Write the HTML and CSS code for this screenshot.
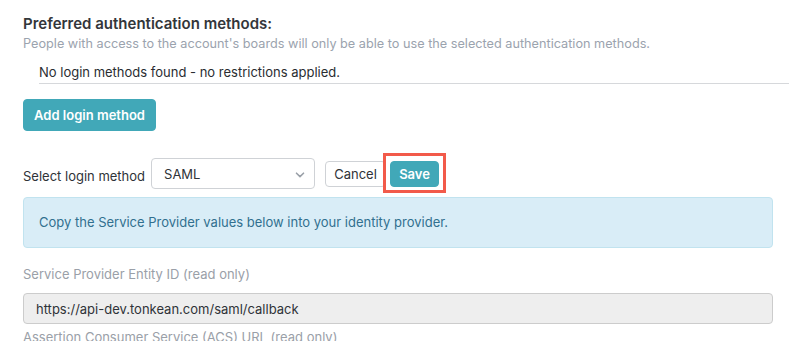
FILE: index.html
```html
<!DOCTYPE html>
<html lang="en">
<head>
    <meta charset="UTF-8">
    <meta name="viewport" content="width=device-width, initial-scale=1.0">
    <title>Login methods</title>
    <link rel="stylesheet" href="styles.css">
</head>
<body>
    <div class="page">
        <h3 class="title">Preferred authentication methods:</h3>
        <p class="subtitle">People with access to the account's boards will only be able to use the selected authentication methods.</p>

        <div class="methods-list">
            <div class="methods-empty">No login methods found - no restrictions applied.</div>
        </div>

        <button class="btn btn-primary btn-add">Add login method</button>

        <div class="select-row">
            <label for="loginMethod" class="select-label">Select login method</label>
            <div class="select-wrap">
                <select id="loginMethod" class="select">
                    <option>SAML</option>
                    <option>Google</option>
                    <option>Microsoft</option>
                </select>
                <svg class="chevron" width="10" height="6" viewBox="0 0 10 6"><path d="M1.5 1.2 L5 4.6 L8.5 1.2" fill="none" stroke="#9aa0a8" stroke-width="1.6" stroke-linecap="round" stroke-linejoin="round"/></svg>
            </div>
            <button class="btn btn-default">Cancel</button>
            <span class="highlight">
                <button class="btn btn-primary btn-save">Save</button>
            </span>
        </div>

        <div class="alert-info">Copy the Service Provider values below into your identity provider.</div>

        <div class="field">
            <label class="field-label">Service Provider Entity ID (read only)</label>
            <input class="field-input" type="text" value="https://api-dev.tonkean.com/saml/callback" readonly>
        </div>
        <div class="field">
            <label class="field-label">Assertion Consumer Service (ACS) URL (read only)</label>
            <input class="field-input" type="text" value="https://api-dev.tonkean.com/saml/callback" readonly>
        </div>
    </div>
</body>
</html>
```

FILE: styles.css
```css
body {
    margin: 0;
    font-family: Inter, "Noto Sans", Arial, sans-serif;
    color: #2f3338;
    background: #fff;
}
.page {
    padding: 14px 12px 0 23px;
}
.title {
    margin: 0;
    font-size: 15px;
    line-height: 20px;
    font-weight: 600;
    color: #33363a;
}
.subtitle {
    margin: 2px 0 0;
    font-size: 12.7px;
    line-height: 16px;
    color: #9ba3ae;
}
.methods-list {
    margin: 11px 0 0 16px;
    border-bottom: 1px solid #d6d8db;
}
.methods-empty {
    font-size: 13px;
    line-height: 18px;
    padding-bottom: 2px;
    color: #2a2d31;
}
.btn {
    font-family: inherit;
    font-size: 13px;
    border-radius: 4px;
    cursor: pointer;
}
.btn-primary {
    background-color: #41a8b8;
    border: 1px solid #41a8b8;
    color: #fff;
    font-weight: 600;
}
.btn-default {
    background: #fff;
    border: 1px solid #cfd2d6;
    color: #2f3338;
    height: 26px;
    width: 61px;
    padding: 0;
}
.btn-add {
    display: block;
    margin-top: 15px;
    height: 32px;
    width: 133px;
    padding: 0;
}
.select-row {
    display: flex;
    align-items: center;
    margin-top: 27px;
    margin-right: 16px;
}
.select-label {
    font-size: 13px;
    color: #2f3338;
    margin-right: 6px;
    padding-top: 4px;
}
.select-wrap {
    position: relative;
    width: 164px;
    height: 31px;
    margin-right: 10px;
}
.select {
    appearance: none;
    width: 100%;
    height: 100%;
    box-sizing: border-box;
    border: 1px solid #cfd2d6;
    border-radius: 4px;
    background: #fff;
    padding: 0 28px 0 12px;
    font-family: inherit;
    font-size: 13px;
    color: #2f3338;
}
.chevron {
    position: absolute;
    right: 10px;
    top: 14px;
    pointer-events: none;
}
.highlight {
    position: relative;
    margin-left: 4px;
    display: inline-block;
}
.highlight::after {
    content: "";
    position: absolute;
    left: -7px;
    top: -8px;
    right: -7px;
    bottom: -6px;
    border: 3px solid #f25a4a;
    pointer-events: none;
}
.btn-save {
    display: block;
    height: 26px;
    width: 49px;
    padding: 0;
}
.alert-info {
    margin: 8px 16px 0 0;
    background-color: #d9edf7;
    border: 1px solid #c1e3ef;
    border-radius: 4px;
    color: #31708f;
    font-size: 13px;
    line-height: 18px;
    padding: 15px 15px 16px;
}
.field {
    margin-right: 16px;
}
.field-label {
    display: block;
    margin-top: 17px;
    font-size: 13px;
    line-height: 18px;
    color: #9aa0a8;
}
.field-input {
    display: block;
    box-sizing: border-box;
    width: 100%;
    height: 31px;
    margin-top: 10px;
    padding: 0 12px;
    background: #eeeeee;
    border: 1px solid #cccccc;
    border-radius: 4px;
    font-family: inherit;
    font-size: 13px;
    color: #2f3338;
}
.field + .field .field-label {
    margin-top: 4px;
}
```
